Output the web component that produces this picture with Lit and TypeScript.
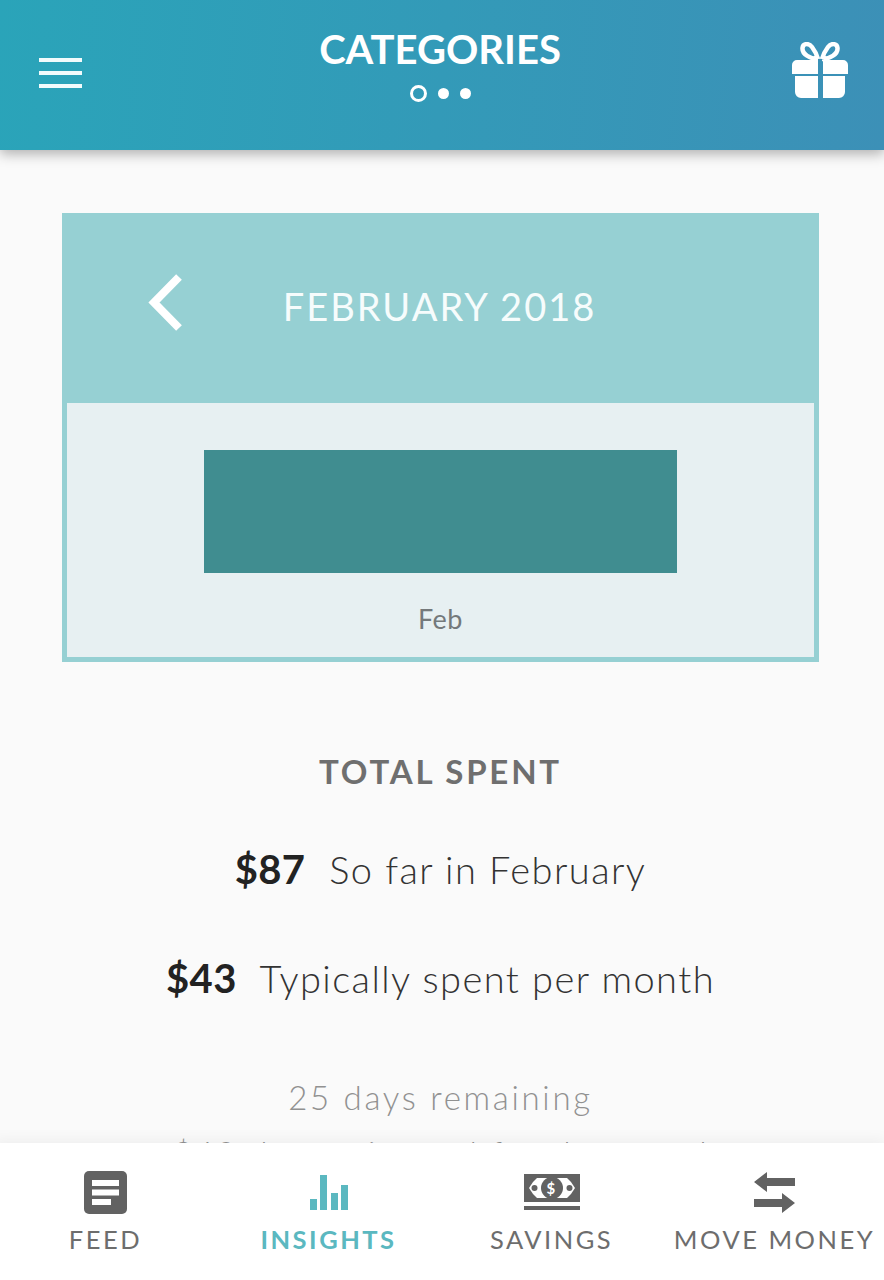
import { LitElement, html, css } from "lit";
import { customElement } from "lit/decorators.js";

@customElement("app-root")
export class AppRoot extends LitElement {
  static styles = css`
    :host { display: block; width: 884px; height: 1280px; overflow: hidden; font-family: Lato, "Liberation Sans", sans-serif; background: #fafafa; }
    .page { display: flex; flex-direction: column; height: 1280px; }
    .top { flex: none; height: 150px; box-sizing: border-box; padding: 29px 36px 0 39px; display: grid; grid-template-columns: 44px 1fr 56px; background: linear-gradient(95deg, #2aa4b9 0%, #3c90b7 100%); box-shadow: 0 4px 12px rgba(0,0,0,.3); position: relative; z-index: 2; color: #fff; }
    .burger { display: flex; flex-direction: column; gap: 9px; padding-top: 29px; width: 43px; }
    .burger i { display: block; height: 4px; background: #f2fbfc; }
    .title { text-align: center; padding-left: 5px; }
    .title h1 { margin: 0; font-size: 40px; line-height: 40px; font-weight: 700; }
    .dots { display: flex; justify-content: center; align-items: center; gap: 11px; margin-top: 16px; }
    .dots i { width: 11px; height: 11px; border-radius: 50%; background: #fff; box-sizing: border-box; }
    .dots i.open { width: 17px; height: 17px; background: transparent; border: 3px solid #fff; }
    .gift { padding-top: 13px; }
    main { flex: 1; min-height: 0; overflow: hidden; display: flex; flex-direction: column; align-items: center; padding: 63px 3px 0 0; }
    .card { flex: none; width: 757px; height: 449px; box-sizing: border-box; border: 5px solid #96d0d3; border-top: 0; background: #e7f0f2; display: flex; flex-direction: column; }
    .card-head { flex: none; height: 190px; background: #96d0d3; color: #f6fcfc; display: grid; place-items: center; position: relative; font-size: 38px; letter-spacing: 2px; padding: 0 2px 4px 0; box-sizing: border-box; }
    .back { position: absolute; left: 81px; top: 61px; }
    .chart { flex: 1; display: flex; flex-direction: column; align-items: center; padding-top: 47px; }
    .bar { width: 473px; height: 123px; background: #408d90; }
    .tick { margin-top: 31px; font-size: 27px; line-height: 30px; letter-spacing: .5px; color: #74797b; }
    .total { flex: none; margin: 89px 0 0; font-size: 33px; line-height: 40px; font-weight: 700; color: #6f6f6f; letter-spacing: 2.8px; }
    .row { flex: none; font-size: 38px; line-height: 44px; font-weight: 300; color: #333; letter-spacing: 1.44px; white-space: nowrap; }
    .row b { font-size: 40px; font-weight: 700; color: #222; margin-right: 12px; letter-spacing: .4px; }
    .r1 { margin-top: 56px; }
    .r2 { margin-top: 65px; }
    .days { flex: none; margin-top: 76px; font-size: 33px; line-height: 42px; font-weight: 300; color: #919191; letter-spacing: 2.7px; }
    .left { flex: none; margin-top: 14px; padding-left: 12px; font-size: 33px; line-height: 42px; font-weight: 300; color: #919191; letter-spacing: 2.5px; white-space: nowrap; }
    nav { flex: none; height: 137px; background: #fff; box-shadow: 0 -3px 14px rgba(0,0,0,.05); position: relative; z-index: 1; display: grid; grid-template-columns: repeat(4, 223px); margin-left: -6px; width: 892px; box-sizing: border-box; }
    .tab { display: flex; flex-direction: column; align-items: center; color: #6d6d6d; font-size: 25.5px; letter-spacing: 2.5px; white-space: nowrap; }
    .tab .ic { height: 44px; margin-top: 27px; display: flex; align-items: center; }
    .tab span { margin-top: 8px; line-height: 34px; }
    .tab.on { color: #5bb8c0; font-weight: 700; }
    svg { display: block; }
  `;

  render() {
    return html`<div class="page">
      <header class="top">
        <div class="burger"><i></i><i></i><i></i></div>
        <div class="title">
          <h1>CATEGORIES</h1>
          <div class="dots"><i class="open"></i><i></i><i></i></div>
        </div>
        <div class="gift">
          <svg width="56" height="56" viewBox="0 0 56 56" fill="#fff">
            <path d="M0 23a5 5 0 0 1 5-5h21v14H0zM31 18h20a5 5 0 0 1 5 5v9H31zM3 34h23v22H9a6 6 0 0 1-6-6zM31 34h22v16a6 6 0 0 1-6 6H31z"/>
            <path d="M26 17C18 17 10 12 10.500 6C11 1 17 1 20 5C23 9 25 13 26 17M30 17C38 17 46 12 45.500 6C45 1 39 1 36 5C33 9 31 13 30 17" fill="none" stroke="#fff" stroke-width="4.500"/>
          </svg>
        </div>
      </header>
      <main>
        <section class="card">
          <div class="card-head">
            <svg class="back" width="36" height="58" viewBox="0 0 36 58" fill="none" stroke="#fff" stroke-width="8"><path d="M31 3 6 28.500 31 54"/></svg>
            FEBRUARY 2018
          </div>
          <div class="chart"><div class="bar"></div><div class="tick">Feb</div></div>
        </section>
        <h2 class="total">TOTAL SPENT</h2>
        <div class="row r1"><b>$87</b> So far in February</div>
        <div class="row r2"><b>$43</b> Typically spent per month</div>
        <div class="days">25 days remaining</div>
        <div class="left">$43 day estimated for the month</div>
      </main>
      <nav>
        <div class="tab"><div class="ic">
          <svg width="43" height="43" viewBox="0 0 43 43"><rect width="43" height="43" rx="5" fill="#626262"/><path d="M8 9h27v6H8zM8 18.500h27v6H8zM8 28h19v6H8z" fill="#fff"/></svg>
        </div><span>FEED</span></div>
        <div class="tab on"><div class="ic">
          <svg width="38" height="35" viewBox="0 0 38 35" fill="#5bb8c0"><path d="M0 24h7v11H0zM10 0h7v35h-7zM21 18h7v17h-7zM31 10h7v25h-7z"/></svg>
        </div><span>INSIGHTS</span></div>
        <div class="tab"><div class="ic">
          <svg width="56" height="36" viewBox="0 0 56 36">
            <path d="M0 0h56v28H0zM0 32h56v4H0z" fill="#626262"/>
            <path d="M5 14 9 8l4-4h30l4 4 4 6-4 6-4 4H13l-4-4z" fill="#fff"/>
            <circle cx="28" cy="14" r="11" fill="#626262"/>
            <circle cx="10.500" cy="14" r="3" fill="#626262"/><circle cx="45.500" cy="14" r="3" fill="#626262"/>
            <text x="28" y="19.500" text-anchor="middle" font-size="15" font-weight="700" fill="#fff" font-family="Lato, sans-serif">$</text>
          </svg>
        </div><span>SAVINGS</span></div>
        <div class="tab"><div class="ic">
          <svg width="41" height="41" viewBox="0 0 41 41" fill="#626262"><path d="M0 10 13 0v6h28v8H13v6zM41 31 28 21v6H0v8h28v6z"/></svg>
        </div><span>MOVE MONEY</span></div>
      </nav>
    </div>`;
  }
}
